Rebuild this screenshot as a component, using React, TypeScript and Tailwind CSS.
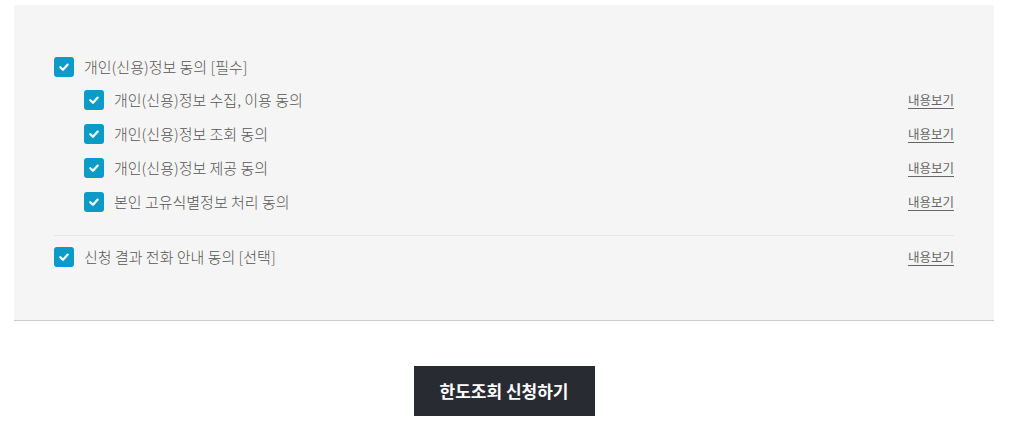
import React from "react";

const font = { fontFamily: '"Noto Sans CJK KR", "Noto Sans", sans-serif' };

function Check() {
  return (
    <span className="flex h-[20px] w-[20px] shrink-0 items-center justify-center rounded-[3px] bg-[#0b9bc6]">
      <svg width="12" height="12" viewBox="0 0 12 12" fill="none">
        <path d="M2.3 6.2 L5 8.8 L9.7 3.6" stroke="#fff" strokeWidth="2.2" strokeLinecap="round" strokeLinejoin="round" />
      </svg>
    </span>
  );
}

function Row({ label, link, indent }: { label: string; link?: boolean; indent?: boolean }) {
  return (
    <div className={`flex h-[20px] items-center justify-between ${indent ? "pl-[30px]" : ""}`}>
      <div className="flex items-center gap-[10px]">
        <Check />
        <span className="text-[15px] leading-[20px] font-light text-[#555]">{label}</span>
      </div>
      {link && (
        <a className="text-[12.5px] leading-[20px] text-[#666] underline underline-offset-[3px]">내용보기</a>
      )}
    </div>
  );
}

export default function App() {
  return (
    <div className="bg-white pl-[14px] pr-[21px] pt-[5px] pb-[15px]" style={font}>
      <div className="border-b border-[#cccccc] bg-[#f5f5f5] px-[40px] pt-[52px] pb-[53px]">
        <Row label="개인(신용)정보 동의 [필수]" />
        <div className="mt-[13px] flex flex-col gap-[14px]">
          <Row indent link label="개인(신용)정보 수집, 이용 동의" />
          <Row indent link label="개인(신용)정보 조회 동의" />
          <Row indent link label="개인(신용)정보 제공 동의" />
          <Row indent link label="본인 고유식별정보 처리 동의" />
        </div>
        <div className="mt-[23px] h-px bg-[#e6e6e6]" />
        <div className="mt-[11px]">
          <Row link label="신청 결과 전화 안내 동의 [선택]" />
        </div>
      </div>
      <div className="mt-[45px] flex justify-center">
        <button className="h-[50px] w-[181px] bg-[#292b33] text-[17px] font-bold text-white">
          한도조회 신청하기
        </button>
      </div>
    </div>
  );
}
